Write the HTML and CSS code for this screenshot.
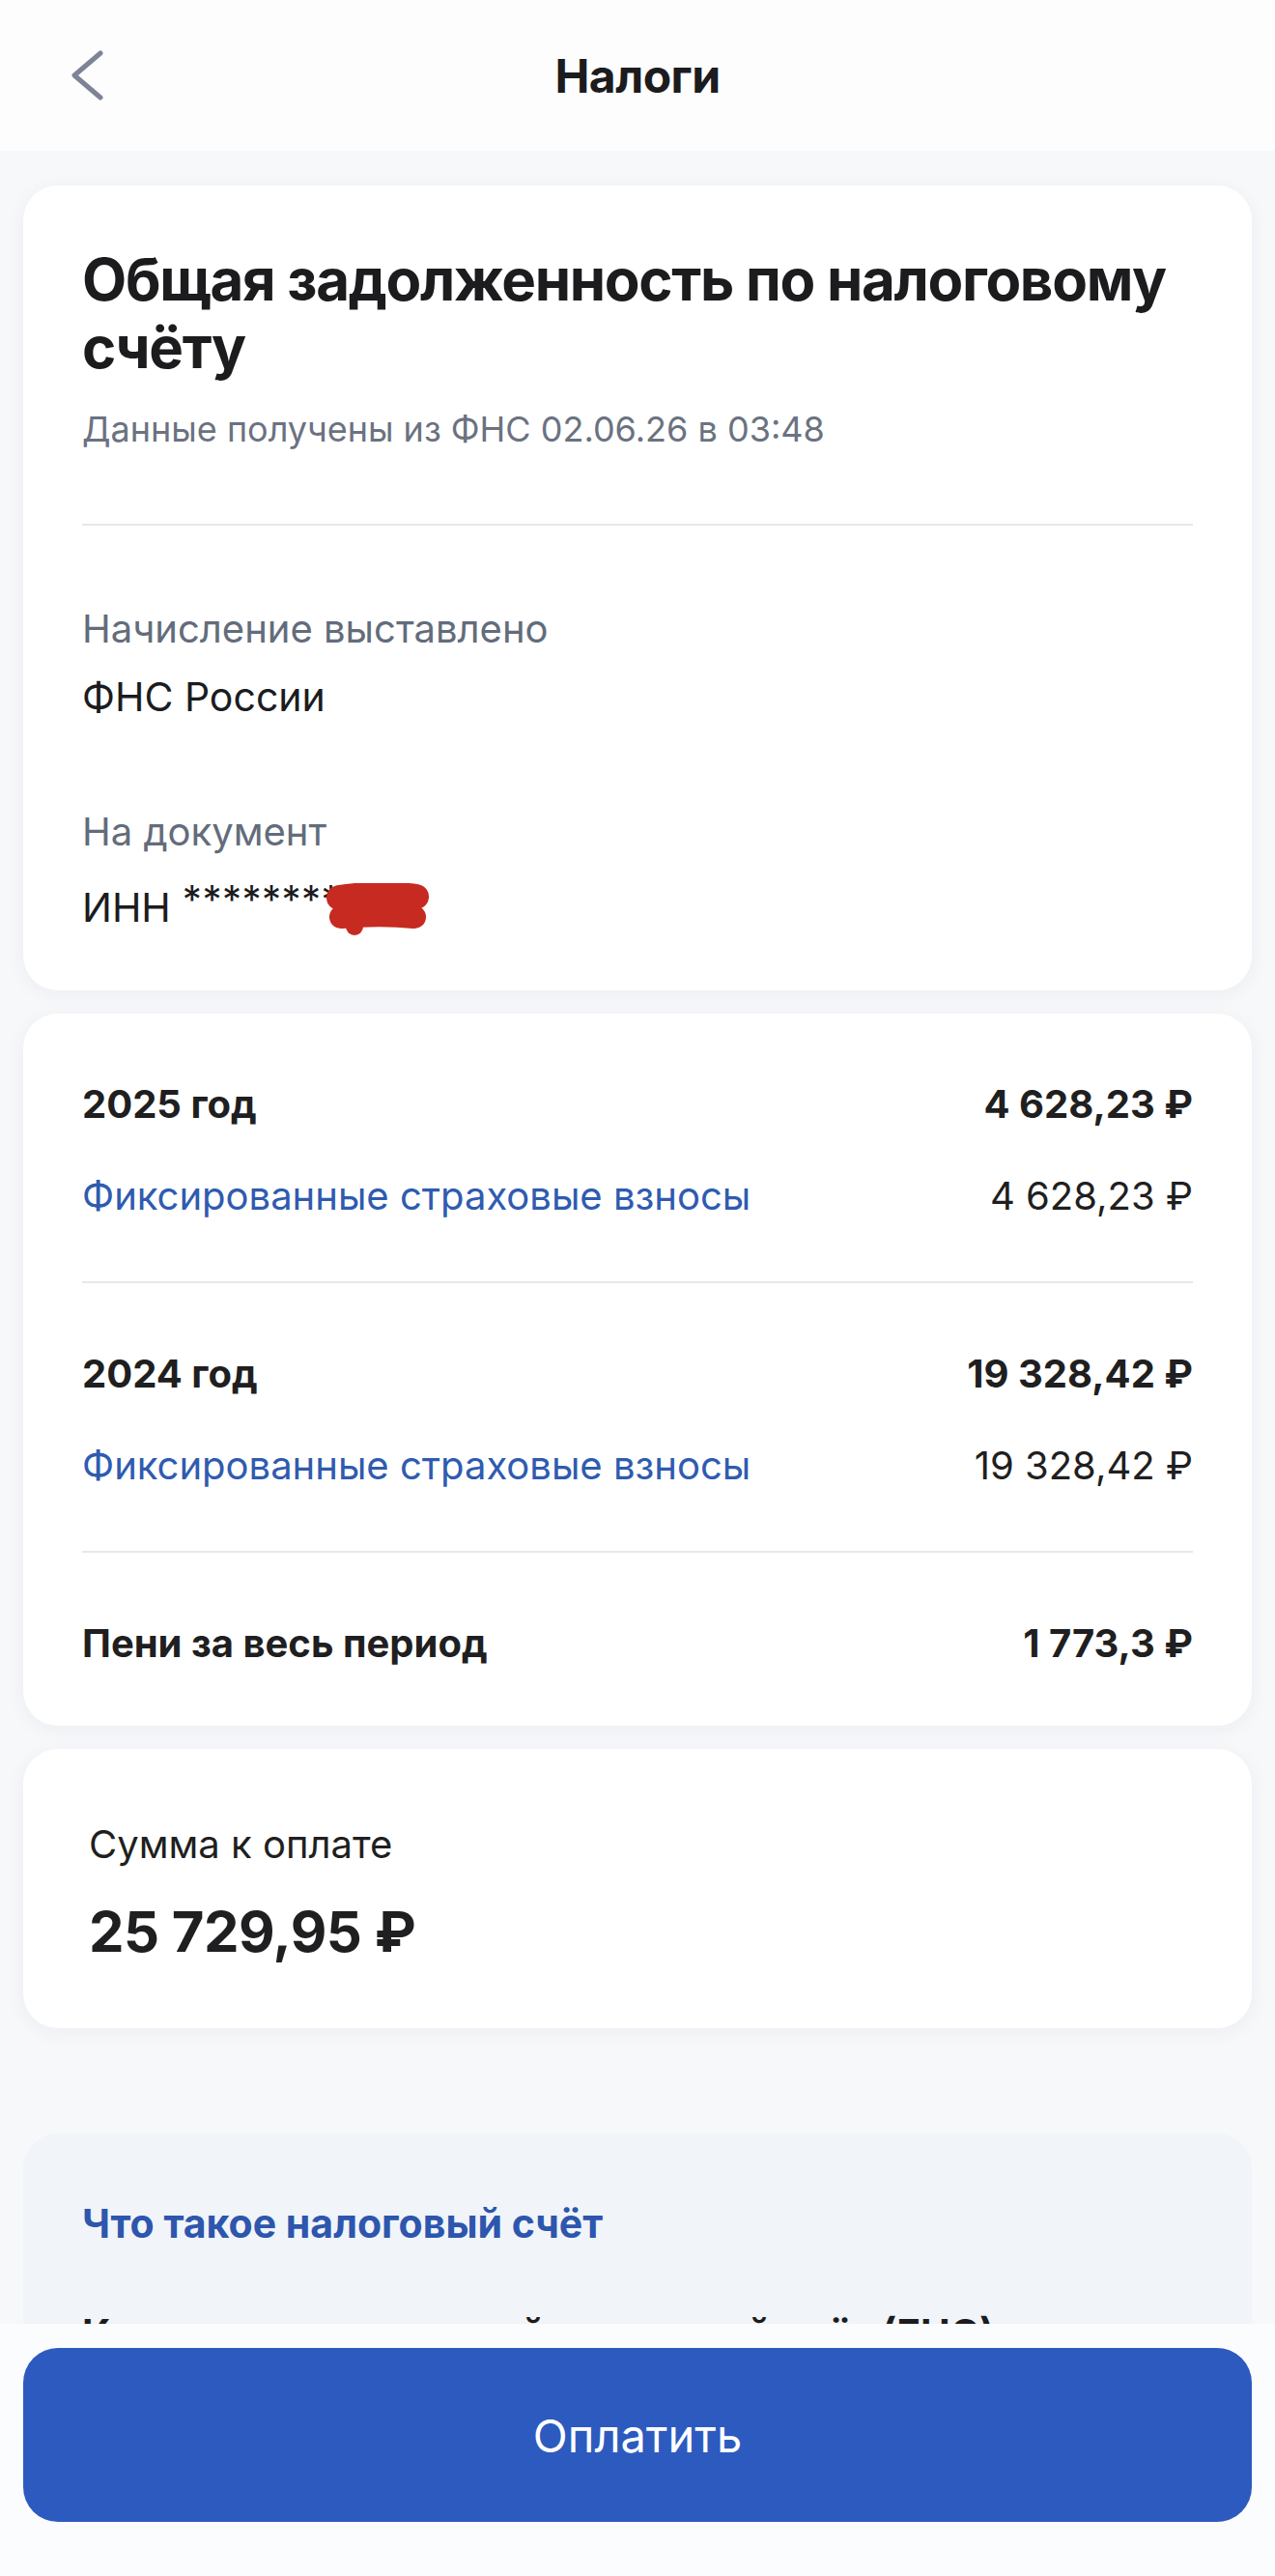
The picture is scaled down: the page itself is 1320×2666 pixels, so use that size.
FILE: index.html
```html
<!DOCTYPE html>
<html lang="ru">
<head>
  <meta charset="UTF-8">
  <title>Налоги</title>
  <meta name="viewport" content="width=device-width, initial-scale=1">
  <link rel="stylesheet" href="styles.css">
</head>
<body>
  <header class="topbar">
    <a class="back" href="#">
      <svg width="34" height="54" viewBox="0 0 34 54">
        <polyline points="30,4 3,27 30,50" fill="none" stroke="#7c8496" stroke-width="5" stroke-linecap="round" stroke-linejoin="round"/>
      </svg>
    </a>
    <div class="topbar-title">Налоги</div>
  </header>

  <main class="content">
    <section class="card card-info">
      <h1>Общая задолженность по налоговому счёту</h1>
      <div class="updated">Данные получены из ФНС 02.06.26 в 03:48</div>
      <hr class="sep">
      <div class="field">
        <div class="field-label">Начисление выставлено</div>
        <div class="field-value">ФНС России</div>
      </div>
      <div class="field">
        <div class="field-label">На документ</div>
        <div class="field-value">ИНН <span class="stars">********</span><svg class="blot" width="108" height="56" viewBox="0 0 108 56">
            <path d="M14 15 C 40 11, 75 11, 94 14" fill="none" stroke="#c62a20" stroke-width="26" stroke-linecap="round"/>
            <path d="M16 35 C 40 33, 72 33, 92 35" fill="none" stroke="#c62a20" stroke-width="24" stroke-linecap="round"/>
            <circle cx="30" cy="45" r="9" fill="#c62a20"/>
          </svg></div>
      </div>
    </section>

    <section class="card card-debts">
      <div class="period">
        <div class="row row-total">
          <span>2025 год</span>
          <span>4 628,23 ₽</span>
        </div>
        <div class="row">
          <a class="row-link" href="#">Фиксированные страховые взносы</a>
          <span>4 628,23 ₽</span>
        </div>
      </div>
      <div class="period">
        <div class="row row-total">
          <span>2024 год</span>
          <span>19 328,42 ₽</span>
        </div>
        <div class="row">
          <a class="row-link" href="#">Фиксированные страховые взносы</a>
          <span>19 328,42 ₽</span>
        </div>
      </div>
      <div class="period period-last">
        <div class="row row-total">
          <span>Пени за весь период</span>
          <span>1 773,3 ₽</span>
        </div>
      </div>
    </section>

    <section class="card card-sum">
      <div class="sum-label">Сумма к оплате</div>
      <div class="sum-value">25 729,95 ₽</div>
    </section>

    <section class="faq">
      <a class="faq-link" href="#">Что такое налоговый счёт</a>
      <a class="faq-link faq-link-plain" href="#">Как пополнить единый налоговый счёт (ЕНС)</a>
    </section>
  </main>

  <footer class="paybar">
    <button class="pay-btn" type="button">Оплатить</button>
  </footer>
</body>
</html>
```

FILE: styles.css
```css
body {
  margin: 0;
  min-height: 2666px;
  background: #f7f8fa;
  font-family: "Inter", "Liberation Sans", "DejaVu Sans", sans-serif;
  color: #1f1f21;
}

.topbar {
  height: 156px;
  display: flex;
  align-items: center;
  justify-content: center;
  position: relative;
  background: #fdfdfe;
}

.back {
  position: absolute;
  left: 74px;
  top: 51px;
  display: block;
}

.topbar-title {
  font-size: 48px;
  font-weight: 700;
  letter-spacing: -0.5px;
  color: #1c1c1e;
}

.content {
  padding: 36px 24px 300px;
  display: flex;
  flex-direction: column;
  gap: 24px;
}

.card {
  background: #fff;
  border-radius: 36px;
  box-shadow: 0 4px 20px rgba(30, 40, 70, 0.05);
}

/* first card */
.card-info {
  padding: 62px 61px 55px;
}

h1 {
  margin: 0;
  font-size: 60px;
  line-height: 70px;
  font-weight: 700;
  letter-spacing: -1.3px;
  color: #1c1c1e;
}

.updated {
  margin-top: 28px;
  font-size: 36px;
  line-height: 44px;
  color: #6b7280;
}

.sep {
  margin: 76px 0 84px;
  border: 0;
  height: 2px;
  background: #e6e8ec;
}

.field + .field {
  margin-top: 94px;
}

.field-label {
  font-size: 40px;
  line-height: 46px;
  color: #636c7b;
}

.field-value {
  margin-top: 24px;
  font-size: 41px;
  line-height: 46px;
  color: #1c1c1e;
  display: flex;
  align-items: center;
}

.stars {
  margin-left: 12px;
  font-size: 40px;
  letter-spacing: 0.5px;
  align-self: flex-start;
}

.blot {
  margin-left: -16px;
  margin-top: 6px;
}

/* debts card */
.card-debts {
  padding: 0 61px;
}

.period {
  padding: 69px 0 63px;
  border-bottom: 2px solid #e6e8ec;
  display: flex;
  flex-direction: column;
  gap: 45px;
}

.period-last {
  border-bottom: 0;
  padding-bottom: 60px;
}

.row {
  display: flex;
  justify-content: space-between;
  font-size: 40px;
  line-height: 50px;
}

.row-total {
  font-weight: 700;
}

.row-link {
  color: #2f5bb0;
  text-decoration: none;
}

/* total */
.card-sum {
  padding: 77px 68px 65px;
}

.sum-label {
  font-size: 40px;
  line-height: 44px;
}

.sum-value {
  margin-top: 33px;
  font-size: 58px;
  line-height: 70px;
  font-weight: 700;
  letter-spacing: -0.5px;
}

/* faq block */
.faq {
  margin-top: 85px;
  background: #f1f4f9;
  border-radius: 36px;
  padding: 68px 61px 80px;
  display: flex;
  flex-direction: column;
  gap: 64px;
}

.faq-link {
  font-size: 41px;
  line-height: 50px;
  font-weight: 700;
  color: #2d56ad;
  text-decoration: none;
}

.faq-link-plain {
  color: #1c1c1e;
}

/* bottom pay bar */
.paybar {
  position: fixed;
  left: 0;
  right: 0;
  bottom: 0;
  height: 261px;
  background: #fbfcfd;
  padding: 25px 24px 0;
  box-sizing: border-box;
}

.pay-btn {
  width: 100%;
  height: 180px;
  border: 0;
  border-radius: 36px;
  background: #2d5abf;
  color: #fff;
  font-family: inherit;
  font-size: 47px;
  font-weight: 400;
  cursor: pointer;
}
```
